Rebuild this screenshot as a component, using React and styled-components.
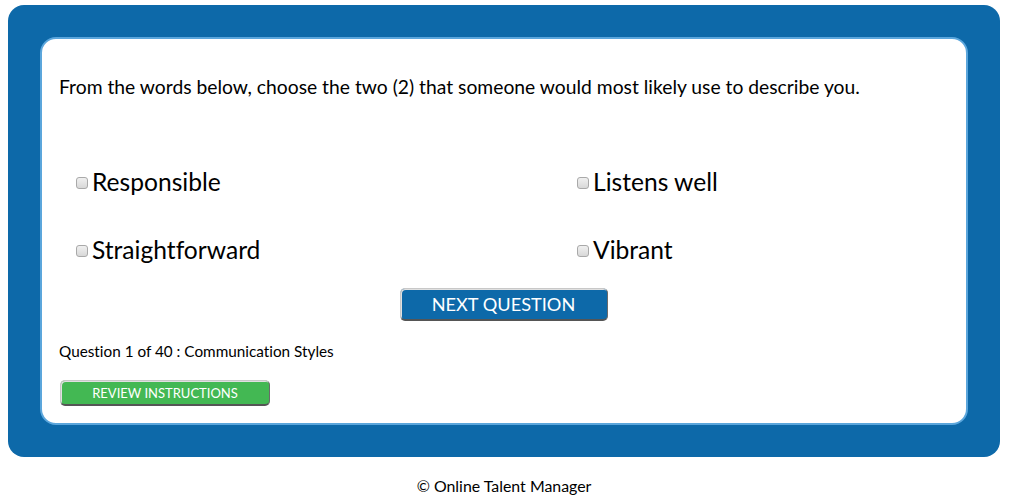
import React from 'react';
import styled, { createGlobalStyle } from 'styled-components';

const GlobalStyle = createGlobalStyle`
  body {
    margin: 5px 0 0 8px;
    font-family: Lato, "Open Sans", sans-serif;
    font-variant-ligatures: none;
    color: #000;
    background: #fff;
  }
`;

/**
 *  Styled Components
 */
const Frame = styled.div`
  width: 992px;
  box-sizing: border-box;
  padding: 32px;
  background: #0d69a9;
  border-radius: 16px;
`;

const Card = styled.div`
  box-sizing: border-box;
  height: 388px;
  padding: 36px 18px 0 17px;
  background: #fff;
  border: 2px solid #5ba6dc;
  border-radius: 16px;
`;

const Prompt = styled.p`
  margin: 0;
  font-size: 19.3px;
  line-height: 24px;
`;

const Options = styled.div`
  display: grid;
  grid-template-columns: 501px 1fr;
  row-gap: 44px;
  margin-top: 71px;
  padding-left: 17px;
`;

const Option = styled.label`
  display: flex;
  align-items: center;
  gap: 4px;
  font-size: 24.6px;
  line-height: 24px;
  cursor: pointer;
`;

const Box = styled.input.attrs({ type: 'checkbox' })`
  appearance: none;
  margin: 1px 0 0 0;
  width: 12px;
  height: 12px;
  border: 1px solid #a9a9a9;
  border-radius: 3px;
  background: linear-gradient(#f0f0f0, #d8d8d8);

  &:checked {
    background: #0d69a9;
  }
`;

const Center = styled.div`
  display: flex;
  justify-content: center;
  margin-top: 26px;
`;

const Button = styled.button`
  box-sizing: border-box;
  width: ${p => p.$w}px;
  height: ${p => p.$h}px;
  padding: 0;
  background: ${p => p.$bg};
  color: #fff;
  font-family: Lato, sans-serif;
  font-variant-ligatures: none;
  font-size: ${p => p.$size}px;
  text-transform: uppercase;
  border: 1px solid #c8c8c8;
  border-right-color: #6a6a6a;
  border-bottom: 2px solid #555;
  border-radius: 5px;
  box-shadow: inset 1px 1px 0 #e0e0e0;
  cursor: pointer;
`;

const Status = styled.div`
  margin-top: 21px;
  font-size: 15.3px;
  line-height: 18px;
`;

const ReviewRow = styled.div`
  margin-top: 20px;
  padding-left: 1px;
`;

const Footer = styled.div`
  width: 992px;
  margin-top: 19px;
  text-align: center;
  font-size: 15.9px;
`;

const words = [
  ['Responsible', 'Listens well'],
  ['Straightforward', 'Vibrant'],
];

export default function App() {
  return (
    <>
      <GlobalStyle />
      <Frame>
        <Card>
          <Prompt>
            From the words below, choose the two (2) that someone would most likely use to describe you.
          </Prompt>
          <Options>
            {words.flat().map(w => (
              <Option key={w}>
                <Box name={w} />
                {w}
              </Option>
            ))}
          </Options>
          <Center>
            <Button $w={208} $h={33} $bg="#0d69a9" $size={18.2}>Next Question</Button>
          </Center>
          <Status>Question 1 of 40 : Communication Styles</Status>
          <ReviewRow>
            <Button $w={210} $h={26} $bg="#43b853" $size={13}>Review Instructions</Button>
          </ReviewRow>
        </Card>
      </Frame>
      <Footer>© Online Talent Manager</Footer>
    </>
  );
}
